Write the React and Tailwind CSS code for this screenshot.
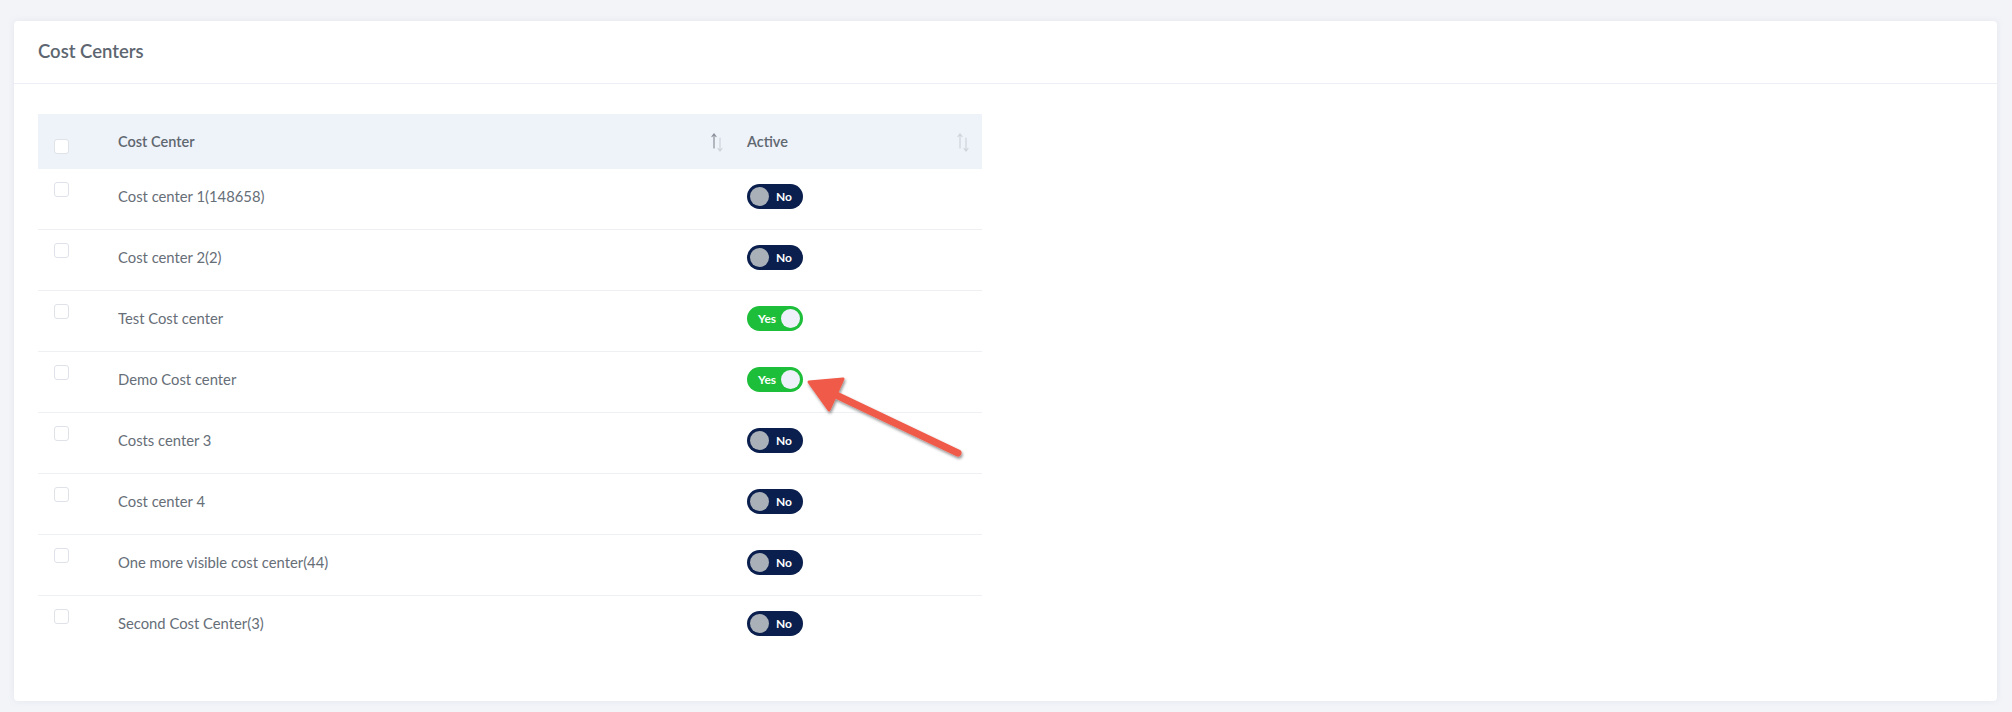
import React from 'react';

const rows = [
  { name: 'Cost center 1(148658)', active: false },
  { name: 'Cost center 2(2)', active: false },
  { name: 'Test Cost center', active: true },
  { name: 'Demo Cost center', active: true },
  { name: 'Costs center 3', active: false },
  { name: 'Cost center 4', active: false },
  { name: 'One more visible cost center(44)', active: false },
  { name: 'Second Cost Center(3)', active: false },
];

const SortIcon = ({ dark }) => (
  <svg width="14" height="20" viewBox="0 0 14 20" fill="none" strokeWidth="1.2" strokeLinecap="round">
    <g stroke={dark ? '#8a8f98' : '#cfd3da'}>
      <path d="M4 2v14M2 4.5L4 2l2 2.5" />
    </g>
    <g stroke="#cfd3da">
      <path d="M10 6v13M8 16.5l2 2.5 2-2.5" />
    </g>
  </svg>
);

const Checkbox = () => (
  <span className="block w-[15px] h-[15px] rounded-[3px] border border-[#dfe2e8] bg-white" />
);

const Toggle = ({ on }) =>
  on ? (
    <span className="flex items-center justify-between w-[56px] h-[25px] rounded-full bg-[#1dbf3a] pl-[11px] pr-[3px]">
      <span className="text-white text-[12px] font-bold leading-none">Yes</span>
      <span className="w-[19px] h-[19px] rounded-full bg-[#eef1fa]" />
    </span>
  ) : (
    <span className="flex items-center gap-[7px] w-[56px] h-[25px] rounded-full bg-[#0a1f4d] pl-[3px]">
      <span className="w-[19px] h-[19px] rounded-full bg-[#a9b0b8]" />
      <span className="text-white text-[12px] font-bold leading-none">No</span>
    </span>
  );

export default function App() {
  return (
    <div
      className="w-[2012px] h-[712px] bg-[#f3f4f8] pt-[21px] pl-[14px] pr-[15px] pb-[11px]"
      style={{ fontFamily: 'Lato, "Open Sans", sans-serif' }}
    >
      <div className="relative h-full bg-white rounded-[4px] shadow-[0_0_6px_rgba(200,205,220,0.35)]">
        <div className="h-[63px] flex items-center px-[24px] border-b border-[#eceff5]">
          <h1 className="text-[18.5px] font-semibold text-[#5d6670] -mt-[1px]">Cost Centers</h1>
        </div>

        <div className="pt-[30px] pl-[24px]">
          <div className="w-[944px]">
            <div className="flex h-[55px] bg-[#eef2f9] items-center">
              <div className="w-[80px] pl-[16px] pt-[9px]">
                <Checkbox />
              </div>
              <div className="w-[614px] flex items-center justify-between pr-[8px]">
                <span className="text-[14.5px] font-semibold text-[#5f6770]">Cost Center</span>
                <SortIcon dark />
              </div>
              <div className="flex-1 flex items-center justify-between pl-[15px] pr-[12px]">
                <span className="text-[14.5px] font-semibold text-[#5f6770]">Active</span>
                <SortIcon />
              </div>
            </div>

            {rows.map((r, i) => (
              <div
                key={r.name}
                className={`flex h-[61px] pt-[13px] ${i < rows.length - 1 ? 'border-b border-[#eef0f4]' : ''}`}
              >
                <div className="w-[80px] pl-[16px]">
                  <Checkbox />
                </div>
                <div className="w-[614px] text-[14.8px] text-[#666e77] pt-[6px] leading-[17px]">{r.name}</div>
                <div className="flex-1 pl-[15px] pt-[2px]">
                  <Toggle on={r.active} />
                </div>
              </div>
            ))}
          </div>
        </div>

        <svg
          className="absolute left-[780px] top-[345px] pointer-events-none"
          width="200"
          height="120"
          viewBox="0 0 200 120"
        >
          <defs>
            <filter id="ash" x="-20%" y="-20%" width="140%" height="140%">
              <feDropShadow dx="1" dy="2" stdDeviation="1.5" floodColor="#000" floodOpacity="0.45" />
            </filter>
          </defs>
          <g filter="url(#ash)">
            <path d="M164 87 L40 28" stroke="#f05a4a" strokeWidth="7" strokeLinecap="round" />
            <path d="M15 16 L49 13 L35 44 Z" fill="#f05a4a" stroke="#f05a4a" strokeWidth="3" strokeLinejoin="round" />
          </g>
        </svg>
      </div>
    </div>
  );
}
